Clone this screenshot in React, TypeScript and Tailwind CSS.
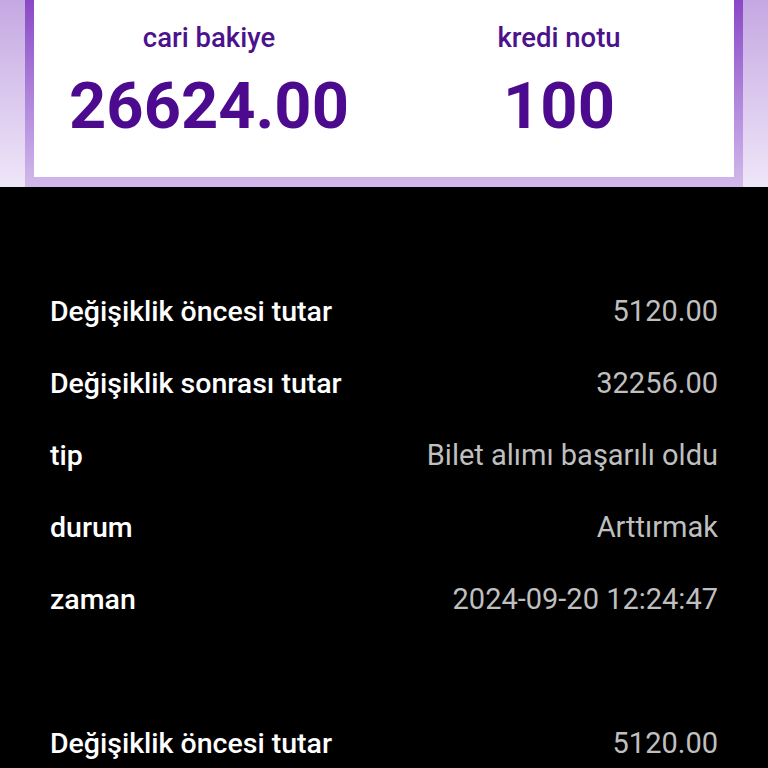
import React from "react";

const rows = [
  ["Değişiklik öncesi tutar", "5120.00"],
  ["Değişiklik sonrası tutar", "32256.00"],
  ["tip", "Bilet alımı başarılı oldu"],
  ["durum", "Arttırmak"],
  ["zaman", "2024-09-20 12:24:47"],
];

function Row({ k, v }: { k: string; v: string }) {
  return (
    <div className="flex h-[72px] items-center justify-between pl-[50px] pr-[50px]">
      <span className="text-[28.5px] font-medium text-white">{k}</span>
      <span className="text-[29px] text-[#bfbfbf]">{v}</span>
    </div>
  );
}

export default function App() {
  return (
    <div className="h-[768px] w-[768px] overflow-hidden bg-black" style={{ fontFamily: "Roboto, 'Noto Sans', sans-serif" }}>
      <div className="h-[187px] bg-gradient-to-b from-[#c5a8e2] to-[#efe6f8] px-[25px]">
        <div className="h-full bg-gradient-to-b from-[#8a47c6] to-[#d2b9eb] px-[9px] pb-[10px]">
          <div className="flex h-full bg-white">
            <div className="flex flex-1 flex-col items-center pt-[19px]">
              <div className="text-[27.5px] font-medium leading-[38px] text-[#4c128c]">cari bakiye</div>
              <div className="mt-[11px] text-[65px] font-bold leading-[76px] text-[#4c0a8e]">26624.00</div>
            </div>
            <div className="flex flex-1 flex-col items-center pt-[19px]">
              <div className="text-[27.5px] font-medium leading-[38px] text-[#4c128c]">kredi notu</div>
              <div className="mt-[11px] text-[65px] font-bold leading-[76px] text-[#4c0a8e]">100</div>
            </div>
          </div>
        </div>
      </div>
      <div className="pt-[53px]">
        <div className="flex flex-col py-[36px]">
          {rows.map(([k, v]) => (
            <Row key={k} k={k} v={v} />
          ))}
        </div>
        <div className="flex flex-col pt-[36px]">
          <Row k={rows[0][0]} v={rows[0][1]} />
        </div>
      </div>
    </div>
  );
}
